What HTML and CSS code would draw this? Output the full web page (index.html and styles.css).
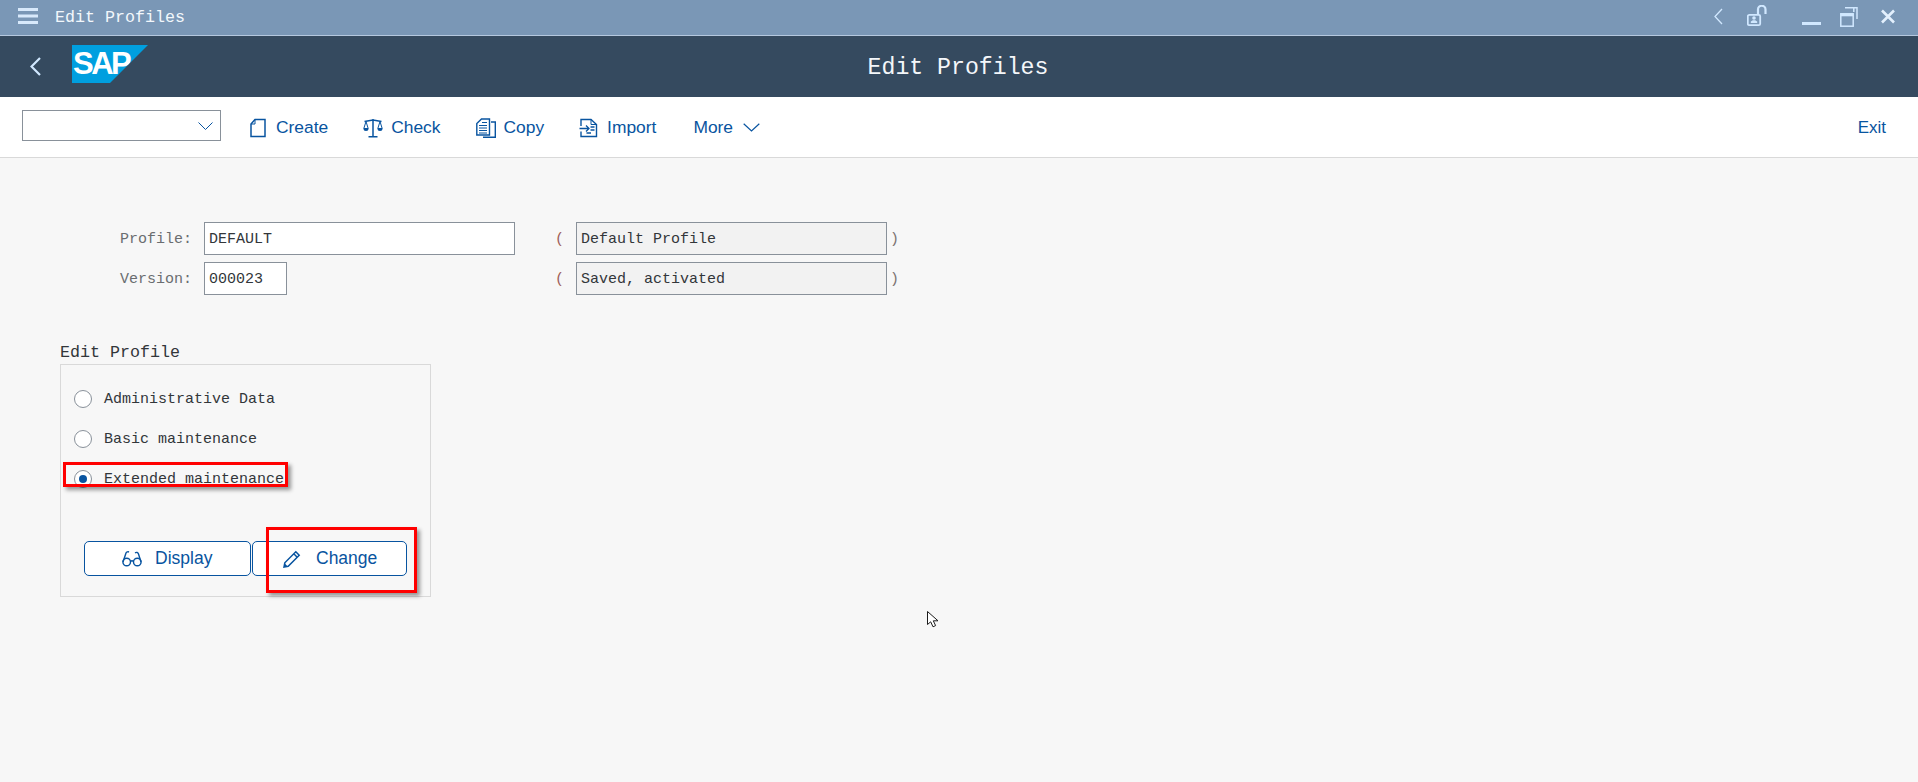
FILE: index.html
```html
<!DOCTYPE html>
<html lang="en">

<head>
    <meta charset="UTF-8">
    <title>Edit Profiles</title>
    <link rel="stylesheet" href="styles.css">
</head>

<body>
    <div class="titlebar">
        <svg class="ico-menu" width="20" height="22" viewBox="0 0 20 22">
            <path d="M0 3h20v3H0zM0 9.500h20v3H0zM0 16h20v3H0z" fill="#d8e9fb" />
        </svg>
        <span class="titlebar-text">Edit Profiles</span>
        <div class="winctrl">
            <svg width="9" height="22" viewBox="0 0 9 22">
                <path d="M8 4 1 11.500 8 19" fill="none" stroke="#d1e8ff" stroke-width="1.300" />
            </svg>
            <svg class="ctrl-lock" width="20" height="22" viewBox="0 0 20 22">
                <rect x="0.800" y="9.800" width="12.400" height="10.400" rx="1.500" fill="none" stroke="#d1e8ff" stroke-width="1.800" />
                <circle cx="7" cy="13" r="1.800" fill="#d1e8ff" />
                <path d="M3.800 18v-1.500l2-1.300h2.400l2 1.300V18z" fill="#d1e8ff" />
                <path d="M11 9V4.500a3.700 3.700 0 0 1 7.500 0V9" fill="none" stroke="#d1e8ff" stroke-width="2.200" />
            </svg>
            <svg class="ctrl-min" width="19" height="22" viewBox="0 0 19 22">
                <rect y="17" width="19" height="3" fill="#d1e8ff" />
            </svg>
            <svg class="ctrl-max" width="18" height="22" viewBox="0 0 18 22">
                <path d="M5 2.800H17V14M13.800 3v4" fill="none" stroke="#d1e8ff" stroke-width="1.500" />
                <rect x="0.800" y="8.800" width="12.400" height="12.400" fill="none" stroke="#d1e8ff" stroke-width="1.500" />
                <rect x="0.800" y="8.800" width="12.400" height="2.500" fill="#d1e8ff" />
            </svg>
            <svg class="ctrl-close" width="14" height="22" viewBox="0 0 14 22">
                <path d="M1 5.500 13 17.500M13 5.500 1 17.500" fill="none" stroke="#e3f0fd" stroke-width="2.600" />
            </svg>
        </div>
    </div>

    <div class="header">
        <div class="header-left">
            <svg class="ico-back" width="11" height="19" viewBox="0 0 11 19">
                <path d="M10 1 1.500 9.500 10 18" fill="none" stroke="#d1e8ff" stroke-width="2.200" />
            </svg>
            <div class="logo"><span>SAP</span></div>
        </div>
        <div class="header-title">Edit Profiles</div>
    </div>

    <div class="toolbar">
        <div class="combo">
            <svg width="15" height="8" viewBox="0 0 15 8">
                <path d="M.5.500 7.500 7.500 14.500.500" fill="none" stroke="#0854a0" stroke-width="1" />
            </svg>
        </div>
        <div class="tool">
            <svg width="20" height="20" viewBox="0 0 20 20">
                <path d="M7 1.500H17V18.500H3V6z" fill="none" stroke="#0854a0" stroke-width="1.500" />
                <path d="M7 1.500V6H3" fill="none" stroke="#0854a0" stroke-width="1" />
            </svg>
            <span>Create</span>
        </div>
        <div class="tool">
            <svg width="20" height="20" viewBox="0 0 20 20">
                <path d="M10 1V18M5.500 18.700H14.500M1.500 3.500 10 2l8.500 1.500" fill="none" stroke="#0854a0" stroke-width="1.500" />
                <path d="M3 3.500.8 10.500h4.400zM17 3.500l-2.200 7h4.400z" fill="none" stroke="#0854a0" stroke-width="1" />
                <path d="M.5 10.500h5a2.500 2.500 0 0 1-5 0zM14.500 10.500h5a2.500 2.500 0 0 1-5 0z" fill="#0854a0" />
            </svg>
            <span>Check</span>
        </div>
        <div class="tool">
            <svg width="20" height="20" viewBox="0 0 20 20">
                <path d="M5.500 1H13.500V17H.8V5.500z" fill="none" stroke="#0854a0" stroke-width="1.400" />
                <path d="M15 4h4.300V19.200H7" fill="none" stroke="#0854a0" stroke-width="1.400" />
                <path d="M3 7.500h8M3 10h8M3 12.500h8M3 15h8M6 4.500h5" stroke="#0854a0" stroke-width="1.200" />
            </svg>
            <span>Copy</span>
        </div>
        <div class="tool">
            <svg width="20" height="20" viewBox="0 0 20 20">
                <path d="M2 8V1.500H12L17.500 6.500V18.500H2V13.500" fill="none" stroke="#0854a0" stroke-width="1.400" />
                <path d="M12 1.500V6.500H17.500" fill="none" stroke="#0854a0" stroke-width="1" />
                <path d="M.5 10.500H9.500M7 7.500 10 10.500 7 13.500M11.500 9H15.500M11.500 12H15.500M12 15H7.500" fill="none" stroke="#0854a0" stroke-width="1.300" />
            </svg>
            <span>Import</span>
        </div>
        <div class="tool tool-more">
            <span>More</span>
            <svg width="17" height="9" viewBox="0 0 17 9">
                <path d="M.7.700 8.500 8 16.300.700" fill="none" stroke="#0854a0" stroke-width="1.200" />
            </svg>
        </div>
        <div class="tool tool-exit"><span>Exit</span></div>
    </div>

    <div class="main">
        <div class="row">
            <label class="row-label">Profile:</label>
            <div class="row-value">
                <div class="field">DEFAULT</div>
            </div>
            <span class="paren paren-open">(</span>
            <div class="field field-read">Default Profile</div>
            <span class="paren">)</span>
        </div>
        <div class="row">
            <label class="row-label">Version:</label>
            <div class="row-value">
                <div class="field field-short">000023</div>
            </div>
            <span class="paren paren-open">(</span>
            <div class="field field-read">Saved, activated</div>
            <span class="paren">)</span>
        </div>

        <div class="group-title">Edit Profile</div>
        <div class="group">
            <div class="radio-row"><span class="radio"></span>Administrative Data</div>
            <div class="radio-row"><span class="radio"></span>Basic maintenance</div>
            <div class="radio-row"><span class="radio radio-on"></span>Extended maintenance</div>

            <div class="buttons">
                <div class="btn btn-display">
                    <svg width="20" height="18" viewBox="0 0 20 18">
                        <circle cx="4.700" cy="12" r="3.800" fill="none" stroke="#0854a0" stroke-width="1.400" />
                        <circle cx="15.300" cy="12" r="3.800" fill="none" stroke="#0854a0" stroke-width="1.400" />
                        <path d="M8.500 11.500C9.300 10.800 10.700 10.800 11.500 11.500M1 12 4 3C4.500 1.800 6 1.500 7 2M19 12 16.500 4C16 2.500 14.500 2 13 2.800" fill="none" stroke="#0854a0" stroke-width="1.400" />
                    </svg>
                    <span>Display</span>
                </div>
                <div class="btn btn-change">
                    <svg width="18" height="18" viewBox="0 0 18 18">
                        <path d="M12.800 1.800 16.200 5.200 5.200 16.200 1 17 1.800 12.800zM10.800 3.800l3.400 3.400" fill="none" stroke="#0854a0" stroke-width="1.500" />
                        <path d="M1 17 1.800 13.500 4.500 16.200z" fill="#0854a0" />
                    </svg>
                    <span>Change</span>
                </div>
            </div>

            <div class="mark mark-radio"></div>
            <div class="mark mark-button"></div>
        </div>
    </div>

    <svg class="cursor" width="13" height="17" viewBox="0 0 13 17">
        <path d="M.5.500V13.500L3.700 10.800 6 15.800 8.600 14.600 6.300 9.800H11z" fill="#fff" stroke="#1b1b1b" stroke-width="1" />
    </svg>
</body>

</html>
```

FILE: styles.css
```css
* {
    margin: 0;
    padding: 0;
    box-sizing: border-box;
}

html,
body {
    height: 100%;
}

body {
    background-color: #f7f7f7;
    overflow: hidden;
    font-family: "Liberation Mono", "DejaVu Sans Mono", monospace;
    color: #32363a;
    position: relative;
}

.titlebar {
    height: 36px;
    padding: 5px 23px 0 18px;
    display: flex;
    align-items: flex-start;
    background-color: #7a97b6;
    border-bottom: 1px solid #b5c8df;
}

.titlebar-text {
    margin-left: 17px;
    font-size: 16.670px;
    line-height: 26px;
    color: #f2f7fc;
}

.winctrl {
    margin-left: auto;
    display: flex;
}

.ctrl-lock {
    margin-left: 24px;
}

.ctrl-min {
    margin-left: 35px;
}

.ctrl-max {
    margin-left: 19px;
}

.ctrl-close {
    margin-left: 23px;
}

.header {
    height: 61px;
    background-color: #354a5f;
    display: grid;
    grid-template-columns: 1fr auto 1fr;
    align-items: center;
}

.header-left {
    display: flex;
    align-items: center;
    padding-left: 30px;
}

.logo {
    width: 76px;
    height: 38px;
    margin-left: 31px;
    margin-top: -5px;
    background-color: #009fdf;
    clip-path: polygon(0 0, 100% 0, 50% 100%, 0 100%);
    color: #fff;
    font: bold 31px/38px "Liberation Sans", Arial, sans-serif;
    letter-spacing: -2.500px;
    overflow: hidden;
}

.logo span {
    display: block;
    padding-left: 1px;
}

.ico-back {
    margin-top: -1px;
}

.header-title {
    padding: 2px 2px 0 0;
    font-size: 23.200px;
    color: #f4f7fa;
}

.toolbar {
    height: 61px;
    padding: 0 32px 0 22px;
    display: flex;
    align-items: center;
    gap: 35px;
    background-color: #fff;
    border-bottom: 1px solid #d9d9d9;
    font-family: "Liberation Sans", Arial, sans-serif;
    font-size: 17.400px;
    color: #0854a0;
}

.combo {
    width: 199px;
    height: 31px;
    margin: -3px -8px 0 0;
    padding-right: 7px;
    display: flex;
    align-items: center;
    justify-content: flex-end;
    border: 1px solid #89919a;
}

.tool {
    display: flex;
    align-items: center;
    gap: 8px;
    padding-top: 1px;
}

.tool-more {
    gap: 10px;
    margin-left: 2px;
}

.tool-exit {
    margin-left: auto;
    font-size: 17px;
}

.main {
    padding-top: 64px;
}

.row {
    display: flex;
    align-items: center;
    height: 33px;
    margin-bottom: 7px;
    font-size: 15px;
}

.row-label {
    width: 192px;
    margin-right: 12px;
    padding-top: 2px;
    text-align: right;
    color: #6a6d70;
}

.row-value {
    width: 311px;
}

.field {
    height: 33px;
    padding-left: 4px;
    line-height: 33px;
    background-color: #fff;
    border: 1px solid #89919a;
}

.field-short {
    width: 83px;
}

.field-read {
    width: 311px;
    background-color: #f2f2f2;
}

.paren {
    width: 9px;
    margin-left: 3px;
    padding-top: 2px;
    color: #7d7472;
}

.paren-open {
    width: 21px;
    margin-left: 40px;
    color: #a0605a;
}

.group-title {
    height: 23px;
    margin: 46px 0 0 60px;
    font-size: 16.670px;
    line-height: 24px;
}

.group {
    width: 371px;
    height: 233px;
    margin-left: 60px;
    padding: 14px 0 0 13px;
    border: 1px solid #d9d9d9;
    position: relative;
}

.radio-row {
    height: 40px;
    display: flex;
    align-items: center;
    gap: 12px;
    font-size: 15px;
}

.radio {
    width: 18px;
    height: 18px;
    display: flex;
    align-items: center;
    justify-content: center;
    background-color: #fff;
    border: 1px solid #89919a;
    border-radius: 50%;
}

.radio-on::after {
    content: "";
    width: 8px;
    height: 8px;
    background-color: #0854a0;
    border-radius: 50%;
}

.buttons {
    display: flex;
    gap: 1px;
    margin: 42px 0 0 10px;
    font-family: "Liberation Sans", Arial, sans-serif;
    font-size: 17.500px;
    color: #0854a0;
}

.btn {
    height: 35px;
    display: flex;
    align-items: center;
    background-color: #fff;
    border: 1px solid #0854a0;
    border-radius: 5px;
}

.btn-display {
    width: 167px;
    padding-left: 37px;
    gap: 13px;
}

.btn-change {
    width: 155px;
    padding-left: 30px;
    gap: 15px;
}

.mark {
    position: absolute;
    border: 3px solid #f00;
    box-shadow: 3px 3px 4px rgba(0, 0, 0, 0.4);
}

.mark-radio {
    left: 2px;
    top: 97px;
    width: 225px;
    height: 25px;
}

.mark-button {
    left: 205px;
    top: 162px;
    width: 151px;
    height: 66px;
}

.cursor {
    position: absolute;
    left: 927px;
    top: 611px;
}
```
